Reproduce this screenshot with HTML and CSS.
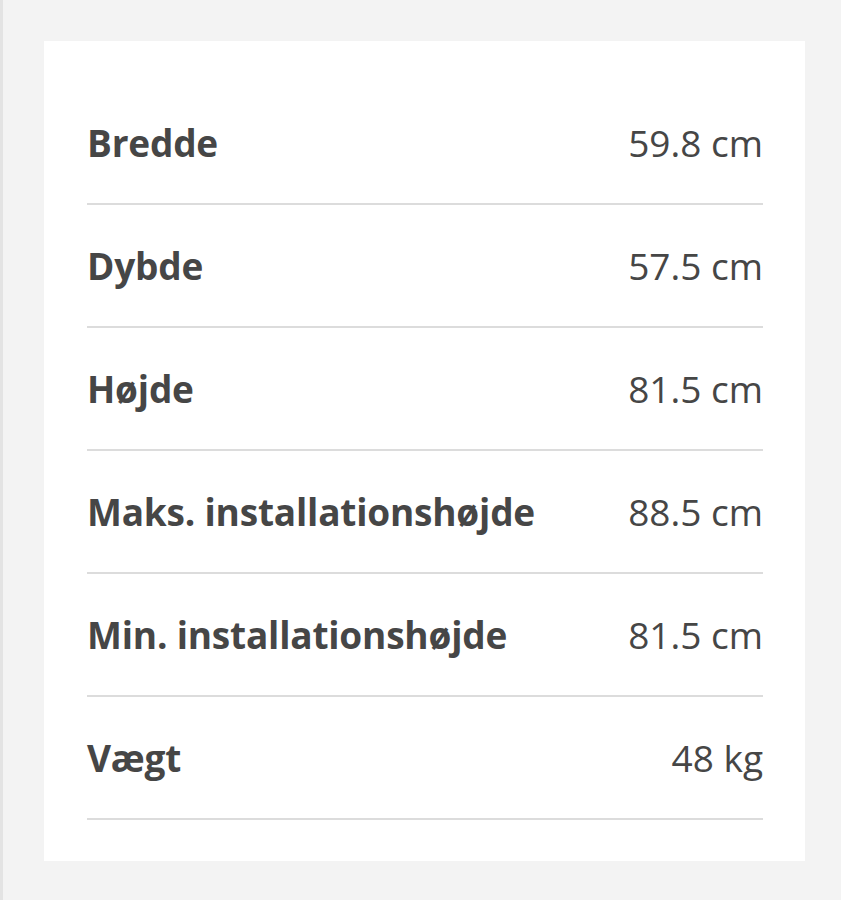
FILE: index.html
```html
<!DOCTYPE html>
<html lang="da">
<head>
  <meta charset="UTF-8">
  <meta name="viewport" content="width=device-width, initial-scale=1.0">
  <title>Mål og vægt</title>
  <link rel="stylesheet" href="styles.css">
</head>
<body>
  <div class="page">
    <div class="card">
      <div class="spec-row">
        <span class="spec-name">Bredde</span>
        <span class="spec-value">59.8 cm</span>
      </div>
      <div class="spec-row">
        <span class="spec-name">Dybde</span>
        <span class="spec-value">57.5 cm</span>
      </div>
      <div class="spec-row">
        <span class="spec-name">Højde</span>
        <span class="spec-value">81.5 cm</span>
      </div>
      <div class="spec-row">
        <span class="spec-name">Maks. installationshøjde</span>
        <span class="spec-value">88.5 cm</span>
      </div>
      <div class="spec-row">
        <span class="spec-name">Min. installationshøjde</span>
        <span class="spec-value">81.5 cm</span>
      </div>
      <div class="spec-row">
        <span class="spec-name">Vægt</span>
        <span class="spec-value">48 kg</span>
      </div>
    </div>
  </div>
</body>
</html>
```

FILE: styles.css
```css
body {
  margin: 0;
  font-family: "Open Sans", "Noto Sans", Arial, sans-serif;
  background-color: #f3f3f3;
  color: #464646;
}

.page {
  min-height: 900px;
  border-left: 3px solid #e3e3e3;
  padding: 41px 36px 0 41px;
}

.card {
  background: #fff;
  padding: 41px 42px 41px 43px;
}

.spec-row {
  display: flex;
  justify-content: space-between;
  align-items: center;
  padding: 32px 0;
  line-height: 57px;
  font-size: 37px;
  border-bottom: 2px solid #dcdcdc;
}

.spec-name {
  font-weight: 700;
  letter-spacing: -0.2px;
}

.spec-value {
  font-weight: 400;
}
```
